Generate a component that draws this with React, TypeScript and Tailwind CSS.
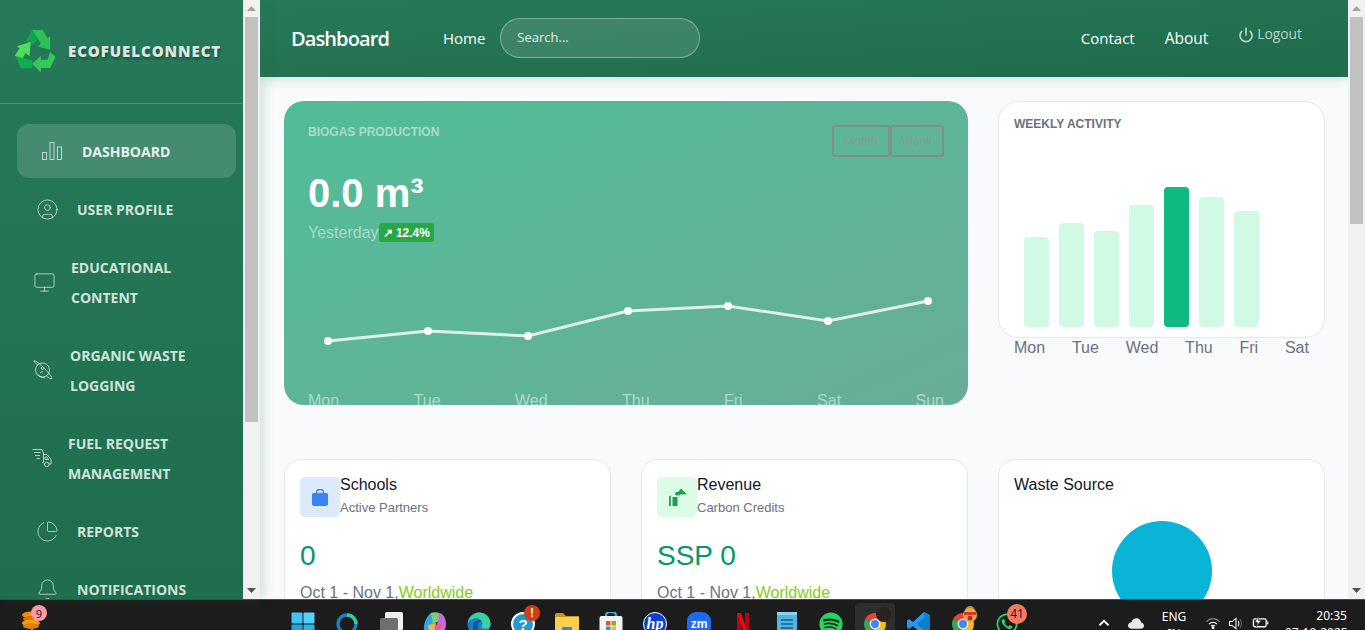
import { Bell, ChartPie, CircleUser, Monitor, Power } from 'lucide-react';
import { FaSpotify, FaWhatsapp } from 'react-icons/fa';
import type { ReactNode } from 'react';

const BarsIcon = () => (
  <svg viewBox="0 0 20 20" className="size-5" fill="none" stroke="currentColor" strokeWidth="1">
    <rect x="0.5" y="11.5" width="4" height="7" />
    <rect x="8" y="1.5" width="4" height="17" />
    <rect x="15.5" y="6" width="4" height="12.5" />
  </svg>
);

const PlanetIcon = () => (
  <svg viewBox="0 0 20 20" className="size-5" fill="none" stroke="currentColor" strokeWidth="1">
    <circle cx="9.5" cy="10" r="7" />
    <path d="M4.5 5 C2 2.5 0.5 1 1 0.8 C2 0.3 6 3 10 7 C14 11 19.5 17 18.8 18.5 C18.2 19.4 16 18 13.5 16.5" />
    <path d="M3 13 C5 15.5 9 18 12 18" />
    <circle cx="9.5" cy="8" r="1.3" />
    <path d="M7 13 L10 11.5" />
  </svg>
);

const TruckIcon = () => (
  <svg viewBox="0 0 20 20" className="size-5" fill="none" stroke="currentColor" strokeWidth="1">
    <path d="M0.5 1.5 H10 L11.5 5 V14.5 H10" />
    <path d="M2 4.5 H8.5 M3 7.5 H8 M4.5 10.5 H8" />
    <path d="M11.5 6.5 H15 L19 11.5 V16 H17" />
    <path d="M11.5 16 H12.5" />
    <circle cx="14.8" cy="16.5" r="2.2" />
    <path d="M13 9 H15 L16.5 11.5 H13 Z" />
  </svg>
);

const RecycleLogo = () => (
  <svg viewBox="45 85 125 135" className="h-[45px] w-[42px]">
    <polygon points="78,122 96,90 112,90 120,106 106,130 96,134" fill="#0ea34f" />
    <polygon points="96,90 128,92 142,116 150,110 150,150 112,140 122,132 110,112" fill="#2cc257" />
    <polygon points="50,140 92,126 88,170 76,160 68,176 50,172 44,168 58,146" fill="#4fdc5f" />
    <polygon points="48,170 70,176 84,180 96,180 96,206 62,206" fill="#0fae50" />
    <polygon points="96,192 122,168 122,180 142,180 150,158 166,172 150,205 122,205 122,218" fill="#32c957" />
  </svg>
);

const navItems: { label: ReactNode; icon: ReactNode; box: string; gap: string; text: string }[] = [
  { label: 'DASHBOARD', icon: <BarsIcon />, box: 'pl-[25px] bg-white/15 rounded-xl', gap: 'gap-5', text: 'text-[#e9f2ee]' },
  { label: 'USER PROFILE', icon: <CircleUser className="size-[23px] shrink-0" strokeWidth={1} />, box: 'pl-5', gap: 'gap-5', text: 'text-[#cfe3da]' },
  { label: <>EDUCATIONAL<br />CONTENT</>, icon: <Monitor className="size-[23px] shrink-0" strokeWidth={1} />, box: 'pl-[17px]', gap: 'gap-[17px]', text: 'text-[#cfe3da]' },
  { label: <>ORGANIC WASTE<br />LOGGING</>, icon: <PlanetIcon />, box: 'pl-4', gap: 'gap-[17px]', text: 'text-[#cfe3da]' },
  { label: <>FUEL REQUEST<br />MANAGEMENT</>, icon: <TruckIcon />, box: 'pl-[15px]', gap: 'gap-4', text: 'text-[#cfe3da]' },
  { label: 'REPORTS', icon: <ChartPie className="size-[23px] shrink-0" strokeWidth={1} />, box: 'pl-5', gap: 'gap-5', text: 'text-[#cfe3da]' },
  { label: 'NOTIFICATIONS', icon: <Bell className="size-[23px] shrink-0" strokeWidth={1} />, box: 'pl-5', gap: 'gap-5', text: 'text-[#cfe3da]' },
];

const bars = [
  { height: 90, active: false },
  { height: 104, active: false },
  { height: 96, active: false },
  { height: 122, active: false },
  { height: 140, active: true },
  { height: 130, active: false },
  { height: 116, active: false },
];

const chartPoints = [
  [20, 49],
  [120, 39],
  [220, 44],
  [320, 19],
  [420, 14],
  [520, 29],
  [620, 9],
];

const stats = [
  {
    title: 'Schools',
    subtitle: 'Active Partners',
    value: '0',
    box: 'bg-[#dbeafe]',
    icon: (
      <svg viewBox="0 0 16 17" className="h-[17px] w-4" fill="#3b82f6">
        <path d="M4 4 V2.5 C4 1 5 0 6.5 0 H9.5 C11 0 12 1 12 2.5 V4 H14.5 C15.4 4 16 4.6 16 5.5 V15 C16 16.2 15.2 17 14 17 H2 C0.8 17 0 16.2 0 15 V5.5 C0 4.6 0.6 4 1.5 4 Z M5.5 4 H10.5 V2.6 C10.5 2 10 1.5 9.4 1.5 H6.6 C6 1.5 5.5 2 5.5 2.6 Z" />
      </svg>
    ),
  },
  {
    title: 'Revenue',
    subtitle: 'Carbon Credits',
    value: 'SSP 0',
    box: 'bg-[#dcfce7]',
    icon: (
      <svg viewBox="0 0 18 18" className="size-[18px]" fill="#16a34a">
        <rect x="4.5" y="9" width="5" height="9" />
        <rect x="1" y="9" width="1.8" height="9" />
        <path d="M1 9 C1 7.5 3 7.5 4 8 L2 9 Z" />
        <path d="M7 6 C7 3.8 9 3.8 10 4 L13 0.5 L18 5.5 V6.5 H12 C11 8 7.5 8 7 6 Z" />
      </svg>
    ),
  },
];

const Scrollbar = ({ thumb }: { thumb: string }) => (
  <div className="flex h-full w-[17px] shrink-0 flex-col items-center bg-[#f1f1f1]">
    <div className="flex h-[17px] items-center justify-center">
      <svg viewBox="0 0 9 5" className="h-[5px] w-[9px]" fill="#a3a3a3"><polygon points="4.5,0 9,5 0,5" /></svg>
    </div>
    <div className={`w-[13px] bg-[#c1c1c1] ${thumb}`} />
    <div className="mt-auto flex h-[17px] items-center justify-center">
      <svg viewBox="0 0 9 5" className="h-[5px] w-[9px]" fill="#505050"><polygon points="0,0 9,0 4.5,5" /></svg>
    </div>
  </div>
);

const ChromeIcon = () => (
  <svg viewBox="0 0 24 24" className="size-6">
    <path d="M12 12 L2.5 6.5 A11 11 0 0 1 21.5 6.5 Z" fill="#ea4335" />
    <path d="M12 12 L21.5 6.5 A11 11 0 0 1 12 23 Z" fill="#fbbc04" />
    <path d="M12 12 L12 23 A11 11 0 0 1 2.5 6.5 Z" fill="#34a853" />
    <circle cx="12" cy="12" r="5.4" fill="#fff" />
    <circle cx="12" cy="12" r="4.2" fill="#4285f4" />
  </svg>
);

const taskbarIcons: ReactNode[] = [
  <svg key="win" viewBox="0 0 24 24" className="size-6">
    <rect x="0.5" y="0.5" width="11" height="11" rx="1" fill="#3fc3f5" />
    <rect x="12.5" y="0.5" width="11" height="11" rx="1" fill="#55d0f9" />
    <rect x="0.5" y="12.5" width="11" height="11" rx="1" fill="#1ea5ea" />
    <rect x="12.5" y="12.5" width="11" height="11" rx="1" fill="#2bb3ef" />
  </svg>,
  <svg key="search" viewBox="0 0 24 24" className="size-6" fill="none">
    <circle cx="12" cy="12" r="9" stroke="#1b7fc4" strokeWidth="3.4" />
    <path d="M12 3 A9 9 0 0 1 21 12" stroke="#33c9a0" strokeWidth="3.4" />
  </svg>,
  <svg key="task" viewBox="0 0 24 24" className="size-6">
    <rect x="6" y="0" width="18" height="18" rx="1.5" fill="#f0f0f0" />
    <rect x="1" y="6" width="18" height="18" rx="1.5" fill="#6f6f6f" />
  </svg>,
  <svg key="copilot" viewBox="0 0 24 24" className="size-6">
    <path d="M8 1 C11 0 13 2 12 6 L9 19 C8 23 2 22 1 18 C0 13 4 3 8 1 Z" fill="#2fa6e0" />
    <path d="M8 1 C11 0 14 0 16 1 L18 8 L10 12 Z" fill="#7bd26a" />
    <path d="M16 1 C20 1 23 6 23 12 C23 18 20 22 16 22 C13 22 12 20 13 17 L15 7 Z" fill="#c86ae0" />
    <path d="M5 13 L13 11 L12 20 C10 23 5 21 5 13 Z" fill="#f2b14a" />
    <path d="M13 13 L19 10 L17 20 L11 22 Z" fill="#ee5d8e" />
  </svg>,
  <svg key="edge" viewBox="0 0 24 24" className="size-6">
    <circle cx="12" cy="12" r="11.5" fill="#1a7dc9" />
    <path d="M1 11 C2 3 9 0 13 0.5 C19 1 24 6 23.5 13 C23.5 16 20 17 16 16.5 C13 16 16 13 15 10 C13 5 5 5 1 11 Z" fill="#3bd0a0" />
    <path d="M6 16 C5 10 11 6 15 9 C12 9 10 12 11 16 C12 20 17 22 20 20 C15 25 7 22 6 16 Z" fill="#0c59a4" />
  </svg>,
  <div key="help" className="relative size-6">
    <div className="flex size-6 items-center justify-center rounded-full border-[2px] border-white bg-[#1f9ad6] font-['Liberation_Sans',sans-serif] text-[15px] leading-none font-bold text-white">?</div>
    <span className="absolute -top-[7px] left-[13px] flex size-4 items-center justify-center rounded-full bg-[#d13f0f] font-['Liberation_Sans',sans-serif] text-[12px] font-bold text-white">!</span>
  </div>,
  <svg key="folder" viewBox="0 0 24 24" className="size-6">
    <path d="M0 3 C0 1.5 1 1 2 1 H8 L11 4 H24 V22 H0 Z" fill="#c9961a" />
    <rect x="0" y="5" width="24" height="18" rx="1" fill="#fbcf4a" />
    <rect x="7" y="15" width="10" height="8" rx="1" fill="#2a8fd6" />
  </svg>,
  <svg key="store" viewBox="0 0 24 24" className="size-6">
    <path d="M7 5 V3 C7 1 9 0 12 0 C15 0 17 1 17 3 V5" fill="none" stroke="#35b6e8" strokeWidth="2" />
    <rect x="0.5" y="4" width="23" height="20" rx="2" fill="#f4f4f4" />
    <rect x="7" y="9" width="4.5" height="4.5" fill="#f25022" />
    <rect x="12.5" y="9" width="4.5" height="4.5" fill="#7fba00" />
    <rect x="7" y="14.5" width="4.5" height="4.5" fill="#00a4ef" />
    <rect x="12.5" y="14.5" width="4.5" height="4.5" fill="#ffb900" />
  </svg>,
  <div key="hp" className="flex size-6 items-center justify-center rounded-full border border-white bg-[#0b3fd6] font-['Liberation_Serif',serif] text-[16px] leading-none font-bold text-white italic">hp</div>,
  <div key="zoom" className="flex size-6 items-center justify-center rounded-[9px] bg-[#1f6bf0] font-['Liberation_Sans',sans-serif] text-[12px] leading-none font-bold text-white">zm</div>,
  <svg key="netflix" viewBox="0 0 24 24" className="size-6">
    <rect x="6" y="1" width="4" height="23" fill="#b0060f" />
    <rect x="14" y="1" width="4" height="23" fill="#b0060f" />
    <polygon points="6,1 10,1 18,24 14,24" fill="#e50914" />
  </svg>,
  <svg key="notepad" viewBox="0 0 24 24" className="size-6">
    <rect x="2" y="2" width="20" height="22" rx="1.5" fill="#4fb5e4" />
    <rect x="2" y="0" width="20" height="3" fill="#8ad3f0" />
    <path d="M6 8 H18 M6 12 H18 M6 16 H18 M6 20 H18" stroke="#0f5e8c" strokeWidth="1.6" />
  </svg>,
  <FaSpotify key="spotify" className="size-6 text-[#1ed760]" />,
  <div key="chrome" className="relative size-6">
    <ChromeIcon />
    <span className="absolute -top-[5px] left-[13px] size-[15px] rounded-full bg-[#2a2320]" />
  </div>,
  <svg key="code" viewBox="0 0 24 24" className="size-6">
    <path d="M17 0 L23 3 V21 L17 24 L6 14 L2 17 L0 15.5 V8.5 L2 7 L6 10 Z M17 6.5 L10.5 12 L17 17.5 Z" fill="#1f9cf0" fillRule="evenodd" />
    <path d="M17 0 L23 3 V21 L17 24 Z M17 6.5 V17.5 L10.5 12 Z" fill="#0f7fcc" fillRule="evenodd" />
  </svg>,
  <div key="chrome2" className="relative size-6">
    <ChromeIcon />
    <svg viewBox="0 0 16 16" className="absolute -top-[6px] left-[11px] size-4">
      <circle cx="8" cy="5" r="5" fill="#8b9a6a" />
      <circle cx="8" cy="9" r="7" fill="#f2a93b" />
      <rect x="2" y="6" width="12" height="3" fill="#d9362b" />
      <circle cx="8" cy="12" r="2.5" fill="#c62828" />
    </svg>
  </div>,
  <div key="whatsapp" className="relative size-6">
    <FaWhatsapp className="size-6 text-[#25d366]" />
    <span className="absolute -top-[8px] left-3 flex size-5 items-center justify-center rounded-full bg-[#f47a63] font-['Noto_Sans',sans-serif] text-[12px] leading-none text-[#1c1c1c]">41</span>
  </div>,
];

export default function App() {
  return (
    <div className="flex h-[630px] w-[1365px] flex-col overflow-hidden bg-[#f8fafc] font-['Liberation_Sans',Arial,sans-serif]">
      <div className="flex h-[599px] shrink-0">
        <div className="relative z-10 flex shrink-0 shadow-[2px_0_12px_rgba(31,110,77,0.22)]">
          <aside className="h-full w-[243px] overflow-hidden bg-gradient-to-b from-[#267a59] to-[#1f6e4d] font-['Open_Sans',sans-serif]">
            <div className="flex h-[104px] items-center gap-[11px] border-b border-white/20 pb-[3px] pl-[15px]">
              <RecycleLogo />
              <span className="mt-[2px] text-[15px] font-extrabold tracking-[0.95px] text-[#dfe6e2] [text-shadow:1px_2px_3px_rgba(0,0,0,0.4)]">ECOFUELCONNECT</span>
            </div>
            <nav className="flex flex-col gap-1 px-[17px] pt-5">
              {navItems.map((item, index) => (
                <a key={index} className={`flex w-[219px] shrink-0 items-center py-3 ${item.box} ${item.gap}`}>
                  <span className="flex w-5 shrink-0 justify-center text-white/65">{item.icon}</span>
                  <span className={`mt-px -mb-px text-[14px] leading-[30px] font-bold ${item.text}`}>{item.label}</span>
                </a>
              ))}
            </nav>
          </aside>
          <Scrollbar thumb="h-[405px]" />
        </div>

        <main className="flex h-full w-[1088px] shrink-0 flex-col overflow-hidden">
          <header className="relative z-[5] flex h-[77px] shrink-0 items-center bg-gradient-to-br from-[#267a59] to-[#1f6b4b] pr-[46px] pl-[31px] font-['Open_Sans',sans-serif] text-white shadow-[0_3px_10px_rgba(31,110,77,0.18)]">
            <span className="text-[20px] font-semibold tracking-[-0.9px]">Dashboard</span>
            <span className="ml-[54px] text-[15px]">Home</span>
            <div className="mb-px ml-[15px] flex h-10 w-[200px] items-center rounded-full border border-white/35 bg-white/12 pl-4 text-[13px] text-white/85">Search...</div>
            <span className="ml-auto text-[15px]">Contact</span>
            <span className="ml-[30px] text-[15.5px]">About</span>
            <span className="mb-[8px] ml-[30px] flex items-center gap-[3px] text-[13.8px] text-white/70">
              <Power className="size-4" strokeWidth={2.5} />
              Logout
            </span>
          </header>

          <div className="grid min-h-0 flex-1 grid-cols-[327px_327px_327px] content-start gap-x-[30px] gap-y-[54px] overflow-hidden pt-6 pl-6">
            <section className="col-span-2 h-[304px] overflow-hidden rounded-[20px] bg-gradient-to-br from-[#50bd97] to-[#68ad97] p-6">
              <div className="flex items-start justify-between">
                <h2 className="mt-[-2px] text-[12px] font-bold text-[#a9dcc8] uppercase">Biogas Production</h2>
                <div className="flex">
                  <button className="h-8 w-[58px] rounded-[3px] border-2 border-[#7f8f89] text-[12px] text-[#7f9f92]">Month</button>
                  <button className="h-8 w-[54px] rounded-[3px] border-2 border-[#7f8f89] text-[12px] text-[#7f9f92]">Week</button>
                </div>
              </div>
              <p className="mt-3 text-[40px] leading-[48px] font-bold text-white">0.0 m³</p>
              <div className="mt-[6px] flex h-[19px] items-center text-[16px] text-[#a9dcc8]">
                Yesterday
                <span className="flex h-[19px] items-center rounded-[3px] bg-[#28a745] px-[4px] text-[12px] font-bold text-white">↗ 12.4%</span>
              </div>
              <svg viewBox="0 0 636 60" className="mt-[50px] h-[60px] w-[636px]">
                <polyline points={chartPoints.map((p) => p.join(',')).join(' ')} fill="none" stroke="rgba(255,255,255,0.8)" strokeWidth="3" />
                {chartPoints.map((p) => (
                  <circle key={p[0]} cx={p[0]} cy={p[1]} r="4" fill="#fff" />
                ))}
              </svg>
              <div className="mt-[37px] flex justify-between text-[16px] leading-6 text-[#a9dcc8]">
                {['Mon', 'Tue', 'Wed', 'Thu', 'Fri', 'Sat', 'Sun'].map((day) => (
                  <span key={day}>{day}</span>
                ))}
              </div>
            </section>

            <section className="h-[304px]">
              <div className="flex h-[237px] flex-col justify-between rounded-[20px] border border-[#e5e7eb] bg-white px-[15px] pt-[13px] pb-[10px]">
                <h2 className="text-[12px] font-bold text-[#6b7280] uppercase">Weekly Activity</h2>
                <div className="flex items-end gap-[10px] pl-[10px]">
                  {bars.map((bar, index) => (
                    <div
                      key={index}
                      className={`w-[25px] rounded-[4px] ${bar.active ? 'bg-[#10b981]' : 'bg-[#d1fae5]'}`}
                      style={{ height: bar.height }}
                    />
                  ))}
                </div>
              </div>
              <div className="flex justify-between px-4 pt-px text-[16px] leading-[18px] text-[#6b7280]">
                {['Mon', 'Tue', 'Wed', 'Thu', 'Fri', 'Sat'].map((day) => (
                  <span key={day}>{day}</span>
                ))}
              </div>
            </section>

            {stats.map((stat) => (
              <section key={stat.title} className="h-[200px] rounded-2xl border border-[#e5e7eb] bg-white px-[15px] pt-[17px]">
                <div className="flex">
                  <span className={`flex size-10 items-center justify-center rounded-[5px] ${stat.box}`}>{stat.icon}</span>
                  <div>
                    <p className="text-[16px] leading-[16px] text-[#111827]">{stat.title}</p>
                    <p className="mt-[7px] text-[13px] leading-[16px] text-[#6b7280]">{stat.subtitle}</p>
                  </div>
                </div>
                <p className="mt-[23px] text-[28px] leading-8 text-[#059669]">{stat.value}</p>
                <p className="mt-[9px] text-[16px] leading-6 text-[#6b7280]">
                  Oct 1 - Nov 1,<span className="text-[#84cc16]">Worldwide</span>
                </p>
              </section>
            ))}

            <section className="h-[200px] rounded-2xl border border-[#e5e7eb] bg-white px-[15px] pt-[17px]">
              <p className="text-[16px] leading-[16px] text-[#111827]">Waste Source</p>
              <div className="mx-auto mt-[28px] size-[100px] rounded-full bg-[#0ab4d6]" />
            </section>
          </div>
        </main>
        <Scrollbar thumb="h-[207px]" />
      </div>

      <footer className="flex h-[31px] shrink-0 items-start overflow-hidden border-t border-[#4a4a4a] bg-[#1c1c1c] font-['Noto_Sans',sans-serif] text-white">
        <div className="relative w-[281px] shrink-0 pt-[10px] pl-[21px]">
          <svg viewBox="0 0 20 20" className="size-5">
            <ellipse cx="10" cy="5" rx="9" ry="3.5" fill="#f08c00" />
            <ellipse cx="10" cy="9" rx="8" ry="3" fill="#d96f00" />
            <ellipse cx="10" cy="13" rx="9" ry="3.5" fill="#f59f0b" />
            <ellipse cx="10" cy="16" rx="8" ry="3" fill="#e08000" />
            <rect x="10" y="19" width="2" height="1" fill="#7cb342" />
          </svg>
          <span className="absolute top-[5px] left-[31px] flex size-4 items-center justify-center rounded-full bg-[#ff9aa8] text-[11px] leading-none text-[#1c1c1c]">9</span>
        </div>
        {taskbarIcons.map((icon, index) => (
          <div key={index} className="flex h-[31px] w-11 shrink-0 justify-center">
            <div className={`mt-[3px] flex h-[28px] w-10 justify-center pt-[9px] ${index === 13 ? 'rounded-t-[4px] bg-[#2e2e2e]' : ''}`}>
              {icon}
            </div>
          </div>
        ))}
        <div className="flex h-[30px] flex-1 items-start pl-[66px]">
          <svg viewBox="0 0 24 24" className="mt-[14px] size-[18px]" fill="none" stroke="#fff" strokeWidth="2.4"><path d="M6 15 L12 9 L18 15" /></svg>
          <svg viewBox="0 0 24 16" className="mt-[18px] ml-[15px] h-[11px] w-4" fill="#e8e8e8"><path d="M6 16 C2 16 0 13.5 0 11 C0 8 2.5 6 5 6 C6.5 2 9.5 0 13 0 C16.5 0 19 2.5 19.5 6 C22 6.5 24 8.5 24 11.5 C24 14 22 16 19 16 Z" /></svg>
          <div className="ml-[15px] w-[30px] pt-[8px] text-center text-[12px] leading-[17px]">ENG<br />IN</div>
          <svg viewBox="0 0 24 18" className="mt-[17px] ml-4 h-3 w-4" fill="none" stroke="#fff" strokeWidth="1.8">
            <path d="M2 7 C8 1 16 1 22 7" stroke="#8a8a8a" />
            <path d="M6 10.5 C9.5 7 14.5 7 18 10.5" />
            <path d="M9 13.5 C11 12 13 12 15 13.5" />
            <circle cx="12" cy="16" r="1.2" fill="#fff" />
          </svg>
          <svg viewBox="0 0 24 20" className="mt-[17px] ml-[7px] h-[13px] w-4" fill="none" stroke="#fff" strokeWidth="1.6">
            <path d="M2 7 H6 L12 2 V18 L6 13 H2 Z" />
            <path d="M15 6 C17 8 17 12 15 14" />
            <path d="M18 3 C21 7 21 13 18 17" stroke="#6f6f6f" />
          </svg>
          <svg viewBox="0 0 24 18" className="mt-4 ml-2 h-[13px] w-[17px]" fill="none" stroke="#fff" strokeWidth="1.8">
            <rect x="2" y="4" width="18" height="11" rx="2" />
            <rect x="21" y="7.5" width="2" height="4" fill="#fff" stroke="none" />
            <polygon points="9,0 4,9 8,9 6,15 13,6 9,6" fill="#fff" stroke="#1c1c1c" strokeWidth="0.8" />
          </svg>
          <div className="ml-4 w-[62px] pt-[7px] text-right text-[12px] leading-[17px] whitespace-nowrap">
            <div>20:35</div>
            <div>07-10-2025</div>
          </div>
        </div>
      </footer>
    </div>
  );
}
